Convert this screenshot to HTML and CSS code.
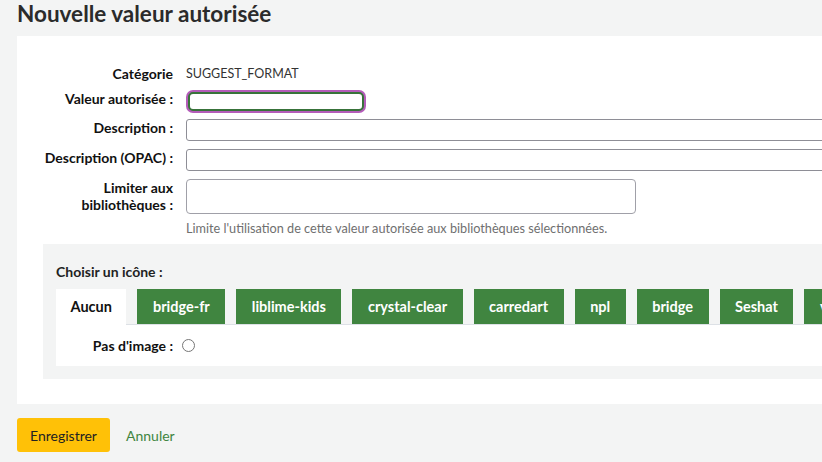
FILE: index.html
```html
<!DOCTYPE html>
<html lang="fr">
<head>
    <meta charset="UTF-8">
    <title>Nouvelle valeur autorisée</title>
    <link rel="stylesheet" href="styles.css">
</head>
<body>
    <main class="page">
        <h1 class="page-title">Nouvelle valeur autorisée</h1>
        <form class="av-form">
            <div class="panel">
                <ol class="field-list">
                    <li class="field-row">
                        <span class="field-label">Catégorie</span>
                        <span class="field-value">SUGGEST_FORMAT</span>
                    </li>
                    <li class="field-row">
                        <label class="field-label" for="authorised_value">Valeur autorisée :</label>
                        <input class="text-input short focused" type="text" id="authorised_value">
                    </li>
                    <li class="field-row">
                        <label class="field-label" for="lib">Description :</label>
                        <input class="text-input wide" type="text" id="lib">
                    </li>
                    <li class="field-row">
                        <label class="field-label" for="lib_opac">Description (OPAC) :</label>
                        <input class="text-input wide" type="text" id="lib_opac">
                    </li>
                    <li class="field-row">
                        <label class="field-label" for="branches">Limiter aux<br>bibliothèques :</label>
                        <div class="field-stack">
                            <div class="multi-select" id="branches"></div>
                            <div class="hint">Limite l'utilisation de cette valeur autorisée aux bibliothèques sélectionnées.</div>
                        </div>
                    </li>
                </ol>

                <fieldset class="icon-box">
                    <div class="icon-box-title">Choisir un icône :</div>
                    <ul class="tabs">
                        <li class="tab active">Aucun</li>
                        <li class="tab">bridge-fr</li>
                        <li class="tab">liblime-kids</li>
                        <li class="tab">crystal-clear</li>
                        <li class="tab">carredart</li>
                        <li class="tab">npl</li>
                        <li class="tab">bridge</li>
                        <li class="tab">Seshat</li>
                        <li class="tab">vatstaf</li>
                    </ul>
                    <div class="tab-pane">
                        <label class="pane-label" for="noimage">Pas d'image :</label>
                        <input class="radio" type="radio" id="noimage" name="image">
                    </div>
                </fieldset>
            </div>

            <div class="actions">
                <button class="save-button" type="button">Enregistrer</button>
                <a class="cancel-link" href="#">Annuler</a>
            </div>
        </form>
    </main>
</body>
</html>
```

FILE: styles.css
```css
body {
    margin: 0;
    background-color: #f3f4f4;
    color: #333333;
    font-family: 'Lato', 'Open Sans', sans-serif;
    font-size: 14px;
    overflow: hidden;
}

.page {
    width: 900px;
    padding-left: 17px;
}

.page-title {
    margin: 0;
    height: 36px;
    line-height: 28px;
    font-size: 22.5px;
    font-weight: bold;
    color: #2b2b2b;
}

.panel {
    background-color: #ffffff;
    padding: 29px 0 25px 26px;
}

.field-list {
    list-style: none;
    margin: 0;
    padding: 0;
}

.field-row {
    display: flex;
    align-items: flex-start;
    gap: 13px;
    margin-bottom: 8px;
}

.field-label {
    width: 130px;
    flex-shrink: 0;
    text-align: right;
    font-weight: bold;
    color: #111111;
    line-height: 17px;
}

.field-value {
    line-height: 17px;
    font-size: 12.5px;
}

.text-input {
    box-sizing: border-box;
    height: 22px;
    margin: 0;
    border: 1px solid #8e8e96;
    border-radius: 3px;
    background: #ffffff;
}

.text-input.short {
    width: 178px;
}

.text-input.wide {
    width: 700px;
}

/* field that has the keyboard focus */
.text-input.focused {
    border: 2px solid #38733a;
    border-radius: 5px;
    box-shadow: 0 0 0 2px #b45cb9;
    height: 19px;
    margin-top: 2px;
    margin-left: 2px;
    width: 176px;
}

.field-stack {
    display: flex;
    flex-direction: column;
}

.multi-select {
    box-sizing: border-box;
    width: 450px;
    height: 35px;
    border: 1px solid #a0a0a8;
    border-radius: 4px;
}

.hint {
    margin-top: 6px;
    font-size: 12.7px;
    color: #6f6f6f;
    line-height: 16px;
}

.icon-box {
    margin: 2px 0 0 0;
    border: 0;
    padding: 19px 0 13px 13px;
    background-color: #f3f4f4;
}

.icon-box-title {
    font-weight: bold;
    line-height: 17px;
    color: #222222;
    margin-bottom: 9px;
}

.tabs {
    display: flex;
    gap: 11px;
    list-style: none;
    margin: 0;
    padding: 0;
    border-bottom: 1px solid #dde1e6;
}

.tab {
    height: 35px;
    line-height: 35px;
    padding: 0 15.5px;
    background-color: #408540;
    color: #ffffff;
    font-weight: bold;
    font-size: 14.5px;
    white-space: nowrap;
}

.tab.active {
    background-color: #ffffff;
    color: #111111;
    margin-bottom: -1px;
    height: 36px;
    padding: 0 14.5px;
}

.tab-pane {
    display: flex;
    align-items: center;
    gap: 9px;
    height: 41px;
    background-color: #ffffff;
}

.pane-label {
    width: 117px;
    text-align: right;
    font-weight: bold;
    color: #111111;
}

.radio {
    margin: 0;
    width: 13px;
    height: 13px;
}

.actions {
    display: flex;
    align-items: center;
    gap: 16px;
    padding-top: 14px;
}

.save-button {
    height: 34px;
    width: 93px;
    border: 0;
    border-radius: 3px;
    background-color: #ffc107;
    color: #222222;
    font-family: inherit;
    font-size: 14px;
}

.cancel-link {
    color: #408540;
    text-decoration: none;
}
```
